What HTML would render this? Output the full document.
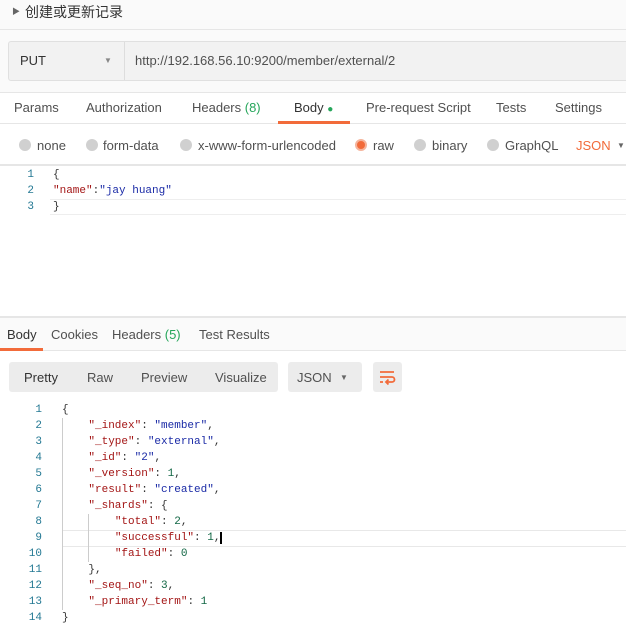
<!DOCTYPE html>
<html><head><meta charset="utf-8"><style>
*{margin:0;padding:0;box-sizing:border-box}
body{width:626px;height:635px;overflow:hidden;background:#fff;font-family:"Liberation Sans","Noto Sans CJK SC",sans-serif;font-size:13px;color:#505050;position:relative}
.a{position:absolute;white-space:nowrap}
.mono{font-family:"Liberation Mono",monospace;font-size:11px}
.k{color:#a31515}.s{color:#1a2aa6}.n{color:#116644}.p{color:#333}
.ln{color:#237893;text-align:right;width:20px}
</style></head><body>
<div class="a" style="left:0;top:0;width:626px;height:30px;background:#fafafa;border-bottom:1px solid #e6e6e6"></div>
<div class="a" style="left:12px;top:6px;font-size:8px;color:#666">▶</div>
<div class="a" style="left:25px;top:2px;font-size:14px;color:#333">创建或更新记录</div>
<div class="a" style="left:0;top:30px;width:626px;height:63px;background:#fafafa;border-bottom:1px solid #e6e6e6"></div>
<div class="a" style="left:8px;top:41px;width:630px;height:40px;background:#f2f2f2;border:1px solid #e0e0e0;border-radius:3px"></div>
<div class="a" style="left:124px;top:42px;width:1px;height:38px;background:#ddd"></div>
<div class="a" style="left:20px;top:53px;color:#333">PUT</div>
<div class="a" style="left:104px;top:56px;font-size:8px;color:#888">▼</div>
<div class="a" style="left:135px;top:53px;color:#505050">http://192.168.56.10:9200/member/external/2</div>
<div class="a" style="left:0;top:93px;width:626px;height:31px;border-bottom:1px solid #e6e6e6;background:#fff"></div>
<div class="a" style="left:14px;top:100px">Params</div>
<div class="a" style="left:86px;top:100px">Authorization</div>
<div class="a" style="left:192px;top:100px">Headers <span style="color:#26a65b">(8)</span></div>
<div class="a" style="left:294px;top:100px;color:#333">Body <span style="color:#26a65b;font-size:10px">●</span></div>
<div class="a" style="left:278px;top:121px;width:72px;height:3px;background:#f26b3a"></div>
<div class="a" style="left:366px;top:100px">Pre-request Script</div>
<div class="a" style="left:496px;top:100px">Tests</div>
<div class="a" style="left:555px;top:100px">Settings</div>
<div class="a" style="left:0;top:125px;width:626px;height:41px;border-bottom:2px solid #e6e6e6"></div>
<div class="a" style="left:19px;top:139px;width:12px;height:12px;border-radius:50%;background:#d0d0d0"></div><div class="a" style="left:37px;top:138px">none</div>
<div class="a" style="left:86px;top:139px;width:12px;height:12px;border-radius:50%;background:#d0d0d0"></div><div class="a" style="left:103px;top:138px">form-data</div>
<div class="a" style="left:180px;top:139px;width:12px;height:12px;border-radius:50%;background:#d0d0d0"></div><div class="a" style="left:198px;top:138px">x-www-form-urlencoded</div>
<div class="a" style="left:355px;top:139px;width:12px;height:12px;border-radius:50%;background:#f26b3a;border:2px solid #f5b49c"></div><div class="a" style="left:373px;top:138px">raw</div>
<div class="a" style="left:414px;top:139px;width:12px;height:12px;border-radius:50%;background:#d0d0d0"></div><div class="a" style="left:432px;top:138px">binary</div>
<div class="a" style="left:487px;top:139px;width:12px;height:12px;border-radius:50%;background:#d0d0d0"></div><div class="a" style="left:505px;top:138px">GraphQL</div>
<div class="a" style="left:576px;top:138px;color:#f26b3a">JSON</div>
<div class="a" style="left:617px;top:141px;font-size:8px;color:#666">▼</div>
<div class="a mono ln" style="left:14px;top:167px;line-height:16px">1<br>2<br>3</div>
<div class="a" style="left:50px;top:199px;width:580px;height:16px;border-top:1px solid #eee;border-bottom:1px solid #eee"></div>
<div class="a mono" style="left:53px;top:167px;line-height:16px"><span class="p">{</span><br><span class="k">"name"</span><span class="p">:</span><span class="s">"jay huang"</span><br><span class="p">}</span></div>
<div class="a" style="left:0;top:316px;width:626px;height:35px;border-top:2px solid #e6e6e6;background:#fafafa;border-bottom:1px solid #e6e6e6"></div>
<div class="a" style="left:7px;top:327px;color:#333">Body</div>
<div class="a" style="left:0;top:348px;width:43px;height:3px;background:#f26b3a"></div>
<div class="a" style="left:51px;top:327px">Cookies</div>
<div class="a" style="left:112px;top:327px">Headers <span style="color:#26a65b">(5)</span></div>
<div class="a" style="left:199px;top:327px">Test Results</div>
<div class="a" style="left:9px;top:362px;width:269px;height:30px;background:#ececec;border-radius:3px"></div>
<div class="a" style="left:24px;top:370px;color:#333">Pretty</div>
<div class="a" style="left:87px;top:370px">Raw</div>
<div class="a" style="left:141px;top:370px">Preview</div>
<div class="a" style="left:215px;top:370px">Visualize</div>
<div class="a" style="left:288px;top:362px;width:74px;height:30px;background:#ececec;border-radius:3px"></div>
<div class="a" style="left:297px;top:370px">JSON</div>
<div class="a" style="left:340px;top:373px;font-size:8px;color:#666">▼</div>
<div class="a" style="left:373px;top:362px;width:29px;height:30px;background:#ececec;border-radius:3px"></div>
<svg class="a" style="left:379px;top:368px" width="17" height="18" viewBox="0 0 17 18"><path d="M1 4H15M1 9H13a2.5 2.5 0 0 1 0 5H7M9.5 11.5L7 14 9.5 16.5M1 14H4" stroke="#f26b3a" stroke-width="1.8" fill="none"/></svg>
<div class="a" style="left:62px;top:530px;width:570px;height:17px;border-top:1px solid #e8e8e8;border-bottom:1px solid #e8e8e8"></div>
<div class="a" style="left:62px;top:418px;width:1px;height:192px;background:#ccc"></div>
<div class="a" style="left:88px;top:514px;width:1px;height:48px;background:#ccc"></div>
<div class="a mono ln" style="left:22px;top:402px;line-height:16px">1<br>2<br>3<br>4<br>5<br>6<br>7<br>8<br>9<br>10<br>11<br>12<br>13<br>14</div>
<div class="a mono" style="left:62px;top:402px;line-height:16px;white-space:pre"><span class="p">{</span>
    <span class="k">"_index"</span><span class="p">: </span><span class="s">"member"</span><span class="p">,</span>
    <span class="k">"_type"</span><span class="p">: </span><span class="s">"external"</span><span class="p">,</span>
    <span class="k">"_id"</span><span class="p">: </span><span class="s">"2"</span><span class="p">,</span>
    <span class="k">"_version"</span><span class="p">: </span><span class="n">1</span><span class="p">,</span>
    <span class="k">"result"</span><span class="p">: </span><span class="s">"created"</span><span class="p">,</span>
    <span class="k">"_shards"</span><span class="p">: {</span>
        <span class="k">"total"</span><span class="p">: </span><span class="n">2</span><span class="p">,</span>
        <span class="k">"successful"</span><span class="p">: </span><span class="n">1</span><span class="p">,</span><span style="border-left:2px solid #000"></span>
        <span class="k">"failed"</span><span class="p">: </span><span class="n">0</span>
    <span class="p">},</span>
    <span class="k">"_seq_no"</span><span class="p">: </span><span class="n">3</span><span class="p">,</span>
    <span class="k">"_primary_term"</span><span class="p">: </span><span class="n">1</span>
<span class="p">}</span></div>
</body></html>
